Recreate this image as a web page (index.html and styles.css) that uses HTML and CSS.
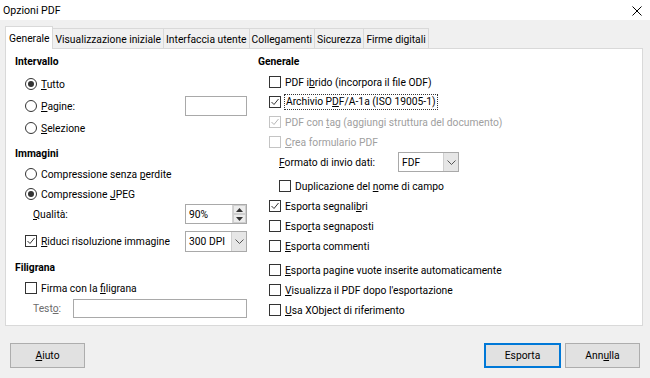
FILE: index.html
```html
<!DOCTYPE html>
<html lang="it">
<head>
    <meta charset="UTF-8">
    <title>Opzioni PDF</title>
    <link rel="stylesheet" href="styles.css">
</head>
<body>
    <header class="titlebar">
        <span class="title">Opzioni PDF</span>
        <svg class="close" width="10" height="10" viewBox="0 0 10 10">
            <path d="M0.5 0.5 L9.5 9.5 M9.5 0.5 L0.5 9.5" stroke="#000" stroke-width="1" fill="none"/>
        </svg>
    </header>

    <div class="dialog">
        <div class="tabs">
            <div class="tab active">Generale</div>
            <div class="tab">Visualizzazione iniziale</div>
            <div class="tab">Interfaccia utente</div>
            <div class="tab">Collegamenti</div>
            <div class="tab">Sicurezza</div>
            <div class="tab">Firme digitali</div>
        </div>

        <div class="panel">
            <!-- Left column -->
            <div class="column left">
                <div class="group">
                    <div class="group-title">Intervallo</div>
                    <div class="options radios">
                        <div class="row"><span class="radio checked"></span><span><u>T</u>utto</span></div>
                        <div class="row between">
                            <div class="row"><span class="radio"></span><span><u>P</u>agine:</span></div>
                            <span class="field short"></span>
                        </div>
                        <div class="row"><span class="radio"></span><span><u>S</u>elezione</span></div>
                    </div>
                </div>

                <div class="group">
                    <div class="group-title">Immagini</div>
                    <div class="options">
                        <div class="row"><span class="radio"></span><span>Compressione senza <u>p</u>erdite</span></div>
                        <div class="row"><span class="radio checked"></span><span>Compressione <u>J</u>PEG</span></div>
                        <div class="row between sub">
                            <span><u>Q</u>ualità:</span>
                            <div class="field short spin">
                                <span class="value">90%</span>
                                <span class="spinner">
                                    <span class="spin-btn"><svg width="7" height="4" viewBox="0 0 7 4"><path d="M0 4 L3.5 0 L7 4 Z" fill="#333"/></svg></span>
                                    <span class="spin-btn"><svg width="7" height="4" viewBox="0 0 7 4"><path d="M0 0 L3.5 4 L7 0 Z" fill="#333"/></svg></span>
                                </span>
                            </div>
                        </div>
                        <div class="row between tall">
                            <div class="row">
                                <span class="check checked"><svg width="10" height="10" viewBox="0 0 10 10"><path d="M1.5 5 L4 7.5 L8.5 2" stroke="#333" stroke-width="1" fill="none"/></svg></span>
                                <span><u>R</u>iduci risoluzione immagine</span>
                            </div>
                            <div class="field short select">
                                <span class="value">300 DPI</span>
                                <span class="drop"><svg width="9" height="5" viewBox="0 0 9 5"><path d="M0.5 0.5 L4.5 4.5 L8.5 0.5" stroke="#555" stroke-width="1" fill="none"/></svg></span>
                            </div>
                        </div>
                    </div>
                </div>

                <div class="group">
                    <div class="group-title">Filigrana</div>
                    <div class="options">
                        <div class="row"><span class="check"></span><span>Firma con la <u>f</u>iligrana</span></div>
                        <div class="row between sub">
                            <span class="muted">Test<u>o</u>:</span>
                            <span class="field wide"></span>
                        </div>
                    </div>
                </div>
            </div>

            <!-- Right column -->
            <div class="column right">
                <div class="group-title">Generale</div>
                <div class="options">
                    <div class="row"><span class="check"></span><span>PDF i<u>b</u>rido (incorpora il file ODF)</span></div>
                    <div class="row">
                        <span class="check checked"><svg width="10" height="10" viewBox="0 0 10 10"><path d="M1.5 5 L4 7.5 L8.5 2" stroke="#333" stroke-width="1" fill="none"/></svg></span>
                        <span class="focus">Archivio P<u>D</u>F/A-1a (ISO 19005-1)</span>
                    </div>
                    <div class="row disabled">
                        <span class="check checked"><svg width="10" height="10" viewBox="0 0 10 10"><path d="M1.5 5 L4 7.5 L8.5 2" stroke="#b5b5b5" stroke-width="1" fill="none"/></svg></span>
                        <span>PDF con <u>t</u>ag (aggiungi struttura del documento)</span>
                    </div>
                    <div class="row disabled"><span class="check"></span><span><u>C</u>rea formulario PDF</span></div>
                    <div class="row sub form-row">
                        <span class="form-label"><u>F</u>ormato di invio dati:</span>
                        <div class="field select fdf">
                            <span class="value">FDF</span>
                            <span class="drop"><svg width="9" height="5" viewBox="0 0 9 5"><path d="M0.5 0.5 L4.5 4.5 L8.5 0.5" stroke="#555" stroke-width="1" fill="none"/></svg></span>
                        </div>
                    </div>
                    <div class="row sub spaced"><span class="check"></span><span>Duplicazione del <u>n</u>ome di campo</span></div>
                    <div class="row">
                        <span class="check checked"><svg width="10" height="10" viewBox="0 0 10 10"><path d="M1.5 5 L4 7.5 L8.5 2" stroke="#333" stroke-width="1" fill="none"/></svg></span>
                        <span>Esporta segnali<u>b</u>ri</span>
                    </div>
                    <div class="row"><span class="check"></span><span>Espo<u>r</u>ta segnaposti</span></div>
                    <div class="row"><span class="check"></span><span><u>E</u>sporta commenti</span></div>
                    <div class="row spaced"><span class="check"></span><span><u>E</u>sporta pagine vuote inserite automaticamente</span></div>
                    <div class="row"><span class="check"></span><span><u>V</u>isualizza il PDF dopo l'esportazione</span></div>
                    <div class="row"><span class="check"></span><span><u>U</u>sa XObject di riferimento</span></div>
                </div>
            </div>
        </div>
    </div>

    <footer class="buttons">
        <button class="btn"><u>A</u>iuto</button>
        <div class="actions">
            <button class="btn default">Esporta</button>
            <button class="btn">Ann<u>u</u>lla</button>
        </div>
    </footer>
</body>
</html>
```

FILE: styles.css
```css
:root {
    --dialog-bg: #f0f0f0;
    --panel-border: #d9d9d9;
    --field-border: #a9a9a9;
    --text-color: #000000;
    --disabled-color: #a0a0a0;
    --accent: #0078d7;
}

* {
    box-sizing: border-box;
    margin: 0;
    padding: 0;
}

body {
    font-family: Roboto, 'Liberation Sans', sans-serif;
    font-size: 10.3px;
    color: var(--text-color);
    background-color: var(--dialog-bg);
    width: 650px;
    height: 378px;
    overflow: hidden;
}

u {
    text-decoration: underline;
    text-underline-offset: 1px;
}

.titlebar {
    height: 20px;
    background-color: #ffffff;
    display: flex;
    align-items: center;
    justify-content: space-between;
    padding: 1px 8px 0 3px;
    font-size: 10.6px;
}

.tabs {
    display: flex;
    align-items: flex-end;
    height: 20px;
    margin: 8px 0 0 5px;
    position: relative;
    z-index: 1;
}

.tab {
    height: 20px;
    line-height: 17px;
    padding: 2px 2px 0;
    border: 1px solid var(--panel-border);
    border-bottom: none;
    margin-left: -1px;
    background-color: var(--dialog-bg);
}

.tab:first-child {
    margin-left: 0;
}

.tab.active {
    height: 23px;
    line-height: 18px;
    margin-bottom: -1px;
    padding: 3px 3px 0;
    background-color: #ffffff;
}

.panel {
    display: flex;
    gap: 11px;
    height: 278px;
    margin: 0 7px 0 5px;
    padding: 5px 0 0 9px;
    background-color: #ffffff;
    border: 1px solid var(--panel-border);
}

.column.left {
    width: 232px;
    display: flex;
    flex-direction: column;
    gap: 8px;
}

.column.right {
    flex: 1;
}

.group-title {
    height: 16px;
    line-height: 16px;
    font-weight: 700;
    margin-bottom: 2px;
}

.options {
    display: flex;
    flex-direction: column;
}

.left .options {
    padding-left: 10px;
}

.options.radios {
    gap: 2px;
    padding-top: 2px;
}

.right .options {
    padding-left: 11px;
}

.row {
    display: flex;
    align-items: center;
    height: 20px;
    white-space: nowrap;
}

.row.between {
    justify-content: space-between;
}

.row.tall {
    height: 22px;
    margin-top: 6px;
}

.row.sub {
    padding-left: 10px;
}

.left .row.sub {
    padding-left: 8px;
}

.row.spaced {
    margin-top: 4px;
}

.radio {
    width: 12px;
    height: 12px;
    border: 1px solid #333333;
    border-radius: 50%;
    margin-right: 4px;
    display: flex;
    align-items: center;
    justify-content: center;
    flex-shrink: 0;
}

.radio.checked::after {
    content: '';
    width: 6px;
    height: 6px;
    border-radius: 50%;
    background-color: #333333;
}

.check {
    width: 12px;
    height: 12px;
    border: 1px solid #333333;
    margin-right: 4px;
    display: flex;
    align-items: center;
    justify-content: center;
    flex-shrink: 0;
    background-color: #ffffff;
}

.disabled {
    color: var(--disabled-color);
}

.disabled .check {
    border-color: #c4c4c4;
}

.muted {
    color: #6d6d6d;
}

.focus {
    outline: 1px dotted #333333;
    outline-offset: 0;
    padding: 0 1px;
    line-height: 14px;
}

.field {
    height: 20px;
    border: 1px solid var(--field-border);
    background-color: #ffffff;
    display: flex;
    align-items: center;
}

.field.short {
    width: 62px;
}

.field.wide {
    width: 174px;
    height: 19px;
}

.field .value {
    flex: 1;
    padding-left: 3px;
}

.spinner {
    width: 14px;
    height: 100%;
    display: flex;
    flex-direction: column;
    border-left: 1px solid #d4d4d4;
}

.spin-btn {
    flex: 1;
    display: flex;
    align-items: center;
    justify-content: center;
    background-color: #ececec;
    border: 1px solid #cfcfcf;
}

.field.select {
    height: 21px;
}

.drop {
    width: 15px;
    height: 100%;
    display: flex;
    align-items: center;
    justify-content: center;
    background-color: #e6e6e6;
    border-left: 1px solid #cfcfcf;
}

.form-label {
    width: 119px;
}

.field.fdf {
    width: 61px;
    height: 20px;
}

.buttons {
    display: flex;
    justify-content: space-between;
    margin-top: 17px;
    padding: 0 10px;
}

.actions {
    display: flex;
    gap: 4px;
}

.btn {
    width: 75px;
    height: 25px;
    font-family: inherit;
    font-size: inherit;
    color: var(--text-color);
    background-color: #e1e1e1;
    border: 1px solid #adadad;
}

.btn.default {
    width: 77px;
    border: 1px solid var(--accent);
    box-shadow: inset 0 0 0 1px var(--accent);
}
```
